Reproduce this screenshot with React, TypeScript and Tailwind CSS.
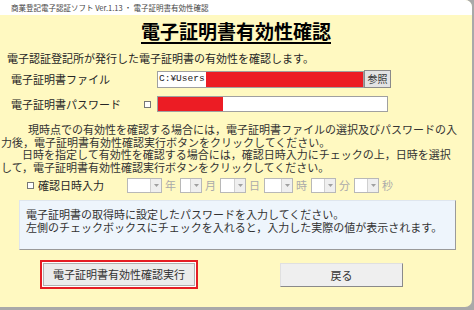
import React from "react";

function Sel({ cls }: { cls: string }) {
  return (
    <div className={`h-[15px] bg-white border border-[#b8b8b8] flex justify-end ${cls}`}>
      <div className="w-[11px] h-full bg-[#efefef] border-l border-[#d0d0d0] flex items-center justify-center">
        <svg width="5" height="3" viewBox="0 0 5 3">
          <path d="M0 0h5L2.5 3z" fill="#a0a0a0" />
        </svg>
      </div>
    </div>
  );
}

function Unit({ t }: { t: string }) {
  return <span className="text-[#aaaaaa] text-[11px] leading-[15px] ml-[3px]">{t}</span>;
}

export default function App() {
  return (
    <div className="w-[474px] h-[310px] bg-[#a9a9a9] overflow-hidden">
      <div className="w-[472px] h-[307px] bg-[#fff9c1] rounded-r-[7px] overflow-hidden flex flex-col text-[#262626] font-['Noto_Sans_CJK_JP',sans-serif]">
        <div className="h-[15px] bg-white shrink-0 pl-[11px] text-[7.5px] leading-[15px] text-[#444] whitespace-nowrap">
          商業登記電子認証ソフト Ver.1.13 ・ 電子証明書有効性確認
        </div>
        <div className="mt-[4px] h-[24px] text-center">
          <span className="text-[19px] font-bold leading-[24px] underline underline-offset-[3px] decoration-[1.5px] text-black">
            電子証明書有効性確認
          </span>
        </div>
        <div className="mt-[8px] pl-[7px] text-[11px] leading-[14px] whitespace-nowrap">
          電子認証登記所が発行した電子証明書の有効性を確認します。
        </div>
        <div className="mt-[5px] h-[18px] flex items-center">
          <div className="pl-[11px] w-[157px] text-[11px] leading-[14px] whitespace-nowrap">電子証明書ファイル</div>
          <div className="w-[207px] h-[17px] bg-white border border-[#a0a0a0] flex items-center">
            <span className="font-['Liberation_Mono',monospace] text-[9.5px] leading-[14px] pl-[1px] pr-[1px] text-[#222]">C:¥Users</span>
            <div className="flex-1 h-full bg-[#ec1c24]" />
          </div>
          <div className="w-[27px] h-[18px] bg-[#e3e3e3] border border-[#8a8a8a] text-[10px] leading-[16px] text-center text-[#333]">
            参照
          </div>
        </div>
        <div className="mt-[7px] h-[18px] flex items-center">
          <div className="pl-[11px] w-[144px] text-[11px] leading-[14px] whitespace-nowrap">電子証明書パスワード</div>
          <div className="w-[7px] h-[7px] border border-[#777] bg-white" />
          <div className="ml-[6px] w-[231px] h-[16px] bg-white border border-[#a0a0a0] flex items-center">
            <div className="w-[65px] h-full bg-[#ec1c24]" />
          </div>
        </div>
        <div className="mt-[10px] text-[11px] leading-[12.5px] text-[#333] whitespace-nowrap">
          <div className="pl-[28px]">現時点での有効性を確認する場合には，電子証明書ファイルの選択及びパスワードの入</div>
          <div className="pl-[1px]">力後，電子証明書有効性確認実行ボタンをクリックしてください。</div>
          <div className="pl-[22px]">日時を指定して有効性を確認する場合には，確認日時入力にチェックの上，日時を選択</div>
          <div className="pl-[1px]">して，電子証明書有効性確認実行ボタンをクリックしてください。</div>
        </div>
        <div className="mt-[4px] h-[16px] flex items-center">
          <div className="ml-[27px] w-[7px] h-[7px] border border-[#777] bg-white" />
          <div className="ml-[4px] w-[89px] text-[11px] leading-[14px] whitespace-nowrap">確認日時入力</div>
          <Sel cls="w-[35px]" />
          <Unit t="年" />
          <Sel cls="ml-[4px] w-[22px]" />
          <Unit t="月" />
          <Sel cls="ml-[4px] w-[26px]" />
          <Unit t="日" />
          <Sel cls="ml-[4px] w-[29px]" />
          <Unit t="時" />
          <Sel cls="ml-[4px] w-[25px]" />
          <Unit t="分" />
          <Sel cls="ml-[4px] w-[25px]" />
          <Unit t="秒" />
        </div>
        <div className="mt-[7px] ml-[19px] w-[437px] h-[50px] shrink-0 bg-[#eef5fc] border-t border-l border-t-[#dfe6ee] border-l-[#dfe6ee] border-r border-b border-r-[#9a9a9a] border-b-[#9a9a9a] pl-[6px] pt-[7px] text-[11px] leading-[13px] text-[#333] whitespace-nowrap">
          <div>電子証明書の取得時に設定したパスワードを入力してください。</div>
          <div>左側のチェックボックスにチェックを入れると，入力した実際の値が表示されます。</div>
        </div>
        <div className="mt-[10px] flex items-center">
          <div className="ml-[40px] w-[158px] h-[29px] border-[2.5px] border-[#e51c23] bg-white p-[1px]">
            <div className="w-full h-full bg-[#ebebeb] border border-[#b0b0b0] text-[11px] leading-[20px] text-center text-[#333]">
              電子証明書有効性確認実行
            </div>
          </div>
          <div className="ml-[82px] w-[123px] h-[24px] bg-[#efefef] border border-t-[#e0e0e0] border-l-[#e0e0e0] border-r-[#8a8a8a] border-b-[#8a8a8a] text-[11px] leading-[22px] text-center text-[#333]">
            戻る
          </div>
        </div>
      </div>
    </div>
  );
}
